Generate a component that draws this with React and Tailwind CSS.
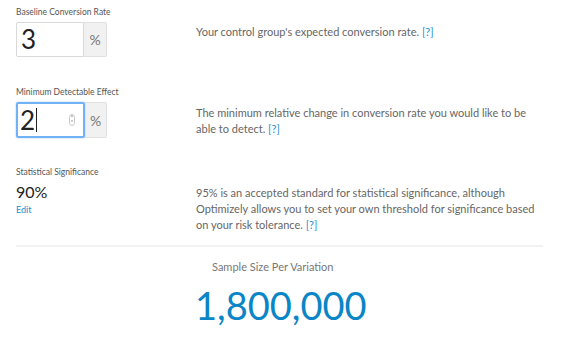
import React from "react";

const font = { fontFamily: "Lato, 'Open Sans', sans-serif" };

const Help = () => <span className="text-[#1a8fd1] cursor-pointer">[?]</span>;

const Row = ({ label, children, desc, descPad }) => (
  <div className="flex h-[80px]">
    <div className="w-[180px] shrink-0">
      <div className="text-[8.5px] leading-[10px] text-[#555] pt-[7px] mb-[5px]">{label}</div>
      {children}
    </div>
    <div className={"w-[342px] text-[11px] leading-[16px] text-[#666] " + descPad}>{desc}</div>
  </div>
);

export default function App() {
  return (
    <div className="w-[568px] h-[339px] bg-white overflow-hidden" style={font}>
      <div className="px-4">
        <Row
          label="Baseline Conversion Rate"
          descPad="pt-[24px]"
          desc={<>Your control group's expected conversion rate. <Help /></>}
        >
          <div className="flex h-[35px]">
            <div className="w-[68px] border border-[#d9d9d9] rounded-l-[2px] flex items-center pl-[4px] text-[26px] text-[#222]">
              3
            </div>
            <div className="w-[23px] bg-[#f1f1f1] border border-l-0 border-[#e0e0e0] rounded-r-[2px] flex items-center justify-center text-[14px] text-[#777]">
              %
            </div>
          </div>
        </Row>
        <Row
          label="Minimum Detectable Effect"
          descPad="pt-[25px]"
          desc={<>The minimum relative change in conversion rate you would like to be able to detect. <Help /></>}
        >
          <div className="flex h-[36px]">
            <div className="w-[69px] border-2 border-[#71b2f5] rounded-[2px] flex items-center pl-[2px] text-[26px] text-[#222] relative shadow-[0_0_2px_#9cc8f7]">
              <span>2</span>
              <span className="w-px h-[24px] bg-[#222] ml-[1px]"></span>
              <span className="absolute right-[8px] top-[10px] w-[6px] h-[12px] border border-[#ccc] rounded-[3px] flex flex-col items-center justify-center text-[5px] leading-[5px] text-[#555]">
                <span>˄</span>
                <span>˅</span>
              </span>
            </div>
            <div className="w-[22px] bg-[#f1f1f1] border border-l-0 border-[#e0e0e0] rounded-r-[2px] flex items-center justify-center text-[14px] text-[#777]">
              %
            </div>
          </div>
        </Row>
        <Row
          label="Statistical Significance"
          descPad="pt-[25px]"
          desc={
            <>
              95% is an accepted standard for statistical significance, although Optimizely allows you to set your own
              threshold for significance based on your risk tolerance. <Help />
            </>
          }
        >
          <div className="text-[16px] leading-[18px] text-[#222] mt-[6px]">90%</div>
          <div className="text-[9px] leading-[11px] text-[#1a8fd1] mt-[3px]">Edit</div>
        </Row>
        <div className="w-[527px] h-[2px] bg-[#f2f2f2] mt-[5px]"></div>
        <div className="pl-[196px] pt-[13px]">
          <div className="text-[11px] leading-[14px] text-[#777]">Sample Size Per Variation</div>
          <div className="text-[38px] leading-[44px] text-[#0a85c6] -ml-[17px] mt-[9px]">1,800,000</div>
        </div>
      </div>
    </div>
  );
}
